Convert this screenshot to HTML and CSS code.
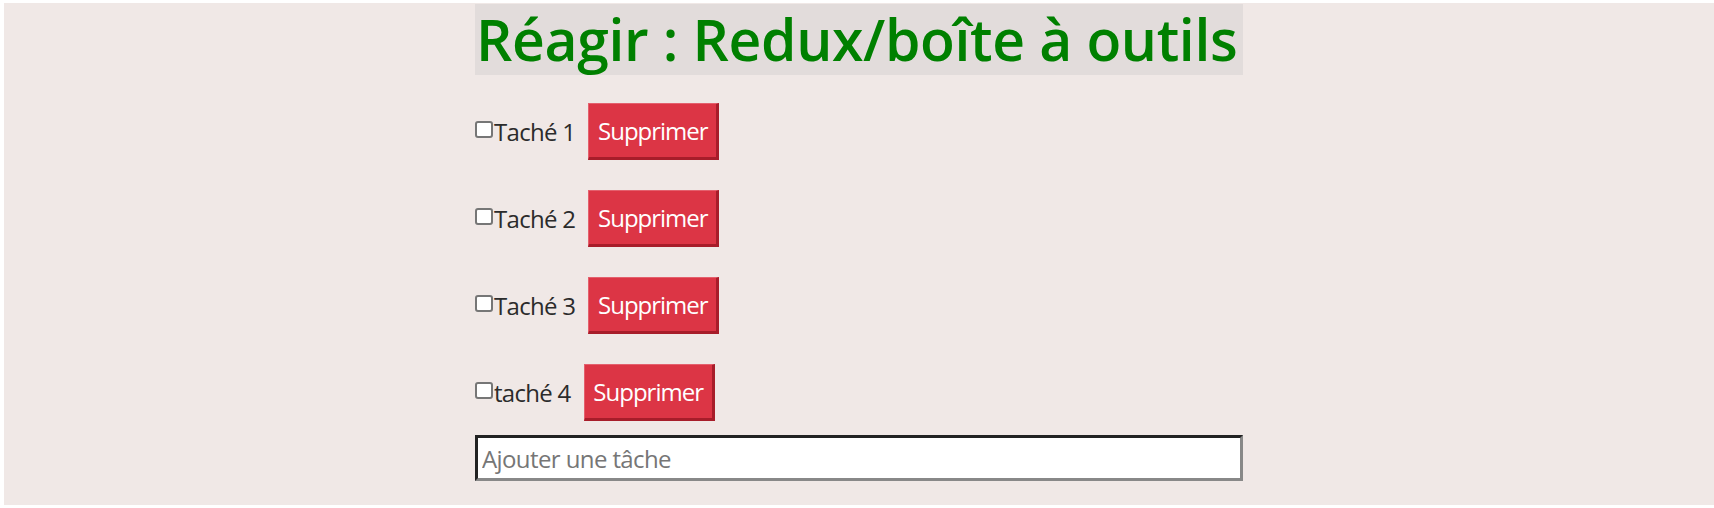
FILE: index.html
```html
<!DOCTYPE html>
<html lang="fr">
<head>
<meta charset="utf-8">
<title>Redux toolkit</title>
<link rel="stylesheet" href="styles.css">
</head>
<body>
<div class="app">
  <h1 class="title">Réagir : Redux/boîte à outils</h1>
  <ul class="todos">
    <li class="todo"><label class="todo-label"><input type="checkbox" class="check">Taché 1</label><button class="delete">Supprimer</button></li>
    <li class="todo"><label class="todo-label"><input type="checkbox" class="check">Taché 2</label><button class="delete">Supprimer</button></li>
    <li class="todo"><label class="todo-label"><input type="checkbox" class="check">Taché 3</label><button class="delete">Supprimer</button></li>
    <li class="todo"><label class="todo-label"><input type="checkbox" class="check">taché 4</label><button class="delete">Supprimer</button></li>
  </ul>
  <input type="text" class="add" placeholder="Ajouter une tâche">
</div>
</body>
</html>
```
FILE: styles.css
```css
html {
  background: #ffffff;
}
body {
  margin: 3px 0 3px 4px;
  height: 502px;
  background: #f0e8e6;
  font-family: "Open Sans", "Noto Sans", sans-serif;
  color: #222;
}
.app {
  width: 768px;
  margin: 0 auto;
  display: flex;
  flex-direction: column;
}
.title {
  margin: 1px 0 0;
  height: 71px;
  line-height: 71px;
  background: #e2dcdb;
  color: #008000;
  font-size: 57px;
  font-weight: 600;
  white-space: nowrap;
  padding-left: 1px;
  letter-spacing: -0.35px;
}
.todos {
  list-style: none;
  margin: 0;
  padding: 28px 0 0;
  display: flex;
  flex-direction: column;
  gap: 30px;
}
.todo {
  display: flex;
  align-items: center;
  height: 57px;
}
.todo-label {
  display: flex;
  align-items: center;
  font-size: 24px;
  letter-spacing: -0.7px;
  color: #2b2b2b;
  margin-right: 13px;
}
.check {
  appearance: none;
  -webkit-appearance: none;
  width: 18px;
  height: 17px;
  margin: -4px 1px 0 0;
  border: 2px solid #767676;
  border-radius: 3px;
  background: #fff;
  box-sizing: border-box;
}
.delete {
  height: 57px;
  width: 131px;
  padding: 0;
  background: #dc3545;
  color: #fff;
  font-family: "Open Sans", "Noto Sans", sans-serif;
  font-size: 24px;
  letter-spacing: -1px;
  border-style: solid;
  border-width: 1px 3px 3px 1px;
  border-color: #e4606d #a71d2a #a71d2a #e4606d;
  box-sizing: border-box;
}
.add {
  margin-top: 14px;
  height: 46px;
  width: 768px;
  box-sizing: border-box;
  border-style: solid;
  border-width: 3px;
  border-color: #222 #888 #888 #222;
  background: #fff;
  font-family: "Open Sans", "Noto Sans", sans-serif;
  font-size: 24px;
  letter-spacing: -0.6px;
  padding: 0 4px;
}
.add::placeholder {
  color: #767676;
}
```
